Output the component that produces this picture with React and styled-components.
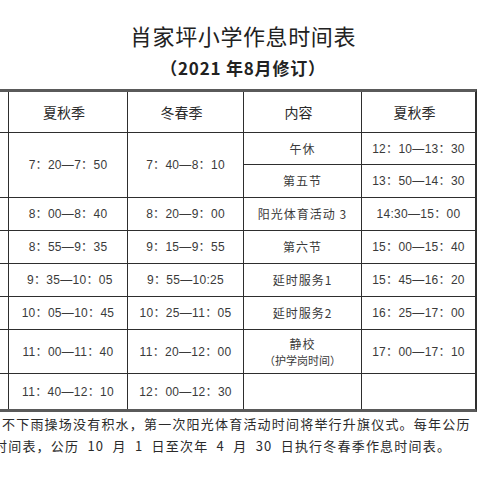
import React from 'react'
import styled, { createGlobalStyle } from 'styled-components'

const GlobalStyle = createGlobalStyle`
  html, body {
    margin: 0;
    padding: 0;
    background: #fff;
  }
  body {
    width: 480px;
    height: 480px;
    overflow: hidden;
    font-family: "Liberation Sans", "Noto Sans CJK SC", sans-serif;
    color: #333;
  }
`

const rows = [
  { left: ['7：20—7：50', '7：40—8：10'], span: 2, right: ['午休', '12：10—13：30'] },
  { right: ['第五节', '13：50—14：30'] },
  { left: ['8：00—8：40', '8：20—9：00'], right: ['阳光体育活动 3', '14:30—15：00'] },
  { left: ['8：55—9：35', '9：15—9：55'], right: ['第六节', '15：00—15：40'] },
  { left: [' 9：35—10：05', '9：55—10:25'], right: ['延时服务1', '15：45—16：20'] },
  { left: ['10：05—10：45', '10：25—11：05'], right: ['延时服务2', '16：25—17：00'] },
  { left: ['11：00—11：40', '11：20—12：00'], right: ['静校', '17：00—17：10'], sub: '（护学岗时间）' },
  { left: ['11：40—12：10', '12：00—12：30'], right: ['', ''] },
]

const App = () => {
  return (
    <Page>
      <GlobalStyle />
      <Heading>
        <h1>肖家坪小学作息时间表</h1>
        <h2>（2021 年8月修订）</h2>
      </Heading>
      <Table>
        <Cell />
        <HeadCell>夏秋季</HeadCell>
        <HeadCell>冬春季</HeadCell>
        <HeadCell>内容</HeadCell>
        <HeadCell>夏秋季</HeadCell>
        {rows.map((r, i) => (
          <React.Fragment key={i}>
            {r.left && (
              <>
                <Cell $span={r.span} />
                <Cell $span={r.span}>{r.left[0]}</Cell>
                <Cell $span={r.span}>{r.left[1]}</Cell>
              </>
            )}
            <Cell $label>
              {r.right[0]}
              {r.sub && <Sub>{r.sub}</Sub>}
            </Cell>
            <Cell>{r.right[1]}</Cell>
          </React.Fragment>
        ))}
      </Table>
      <Notes>
        <NoteLine>不下雨操场没有积水，第一次阳光体育活动时间将举行升旗仪式。每年公历</NoteLine>
        <NoteLine $indent={-6}>时间表，公历  10  月  1  日至次年  4  月  30  日执行冬春季作息时间表。</NoteLine>
      </Notes>
    </Page>
  )
}

const Page = styled.main`
  width: 480px;
  height: 480px;
  overflow: hidden;
  display: flex;
  flex-direction: column;
`

const Heading = styled.header`
  padding: 22px 0 0 6px;
  display: flex;
  flex-direction: column;
  align-items: center;
  h1 {
    margin: 0;
    font-family: "Noto Sans CJK SC", sans-serif;
    font-size: 22px;
    line-height: 26px;
    font-weight: 400;
    color: #222;
    letter-spacing: 0.6px;
  }
  h2 {
    margin: 10px 0 0;
    font-family: "Noto Sans CJK SC", sans-serif;
    font-size: 17px;
    line-height: 20px;
    font-weight: 700;
    letter-spacing: 0.8px;
    color: #222;
    white-space: pre;
  }
`

const Table = styled.section`
  margin-top: 11px;
  width: 476px;
  display: grid;
  grid-template-columns: 8px 118px 115px 117px 113px;
  grid-template-rows: 40px 31px 32px 32px 32px 32px 32px 43px 35px;
  gap: 1px;
  background: #2e2e2e;
  border-top: 3px solid #5a5a5a;
  border-bottom: 3px solid #5a5a5a;
  border-right: 1px solid #2e2e2e;
`

const Cell = styled.div`
  background: #fff;
  grid-row: ${(p) => (p.$span ? `span ${p.$span}` : 'auto')};
  display: flex;
  flex-direction: column;
  align-items: center;
  justify-content: center;
  font-size: 12px;
  letter-spacing: ${(p) => (p.$label ? '1px' : '0.3px')};
  color: #3a3a3a;
  white-space: pre;
  font-family: ${(p) =>
    p.$label ? '"Noto Sans CJK SC", sans-serif' : '"Liberation Sans", "Noto Sans CJK SC", sans-serif'};
  line-height: 16px;
`

const HeadCell = styled(Cell)`
  font-family: "Noto Sans CJK SC", sans-serif;
  font-size: 14px;
  letter-spacing: 0;
  color: #2a2a2a;
  padding-right: 8px;
`

const Sub = styled.span`
  font-size: 11px;
  letter-spacing: 0;
`

const Notes = styled.footer`
  padding-top: 3px;
  display: flex;
  flex-direction: column;
  gap: 4px;
  font-family: "Noto Sans CJK SC", sans-serif;
  font-size: 13px;
  line-height: 18px;
  letter-spacing: 1.2px;
  color: #2a2a2a;
  white-space: pre;
`

const NoteLine = styled.div`
  margin-left: ${(p) => (p.$indent ? `${p.$indent}px` : '2px')};
`

export default App
